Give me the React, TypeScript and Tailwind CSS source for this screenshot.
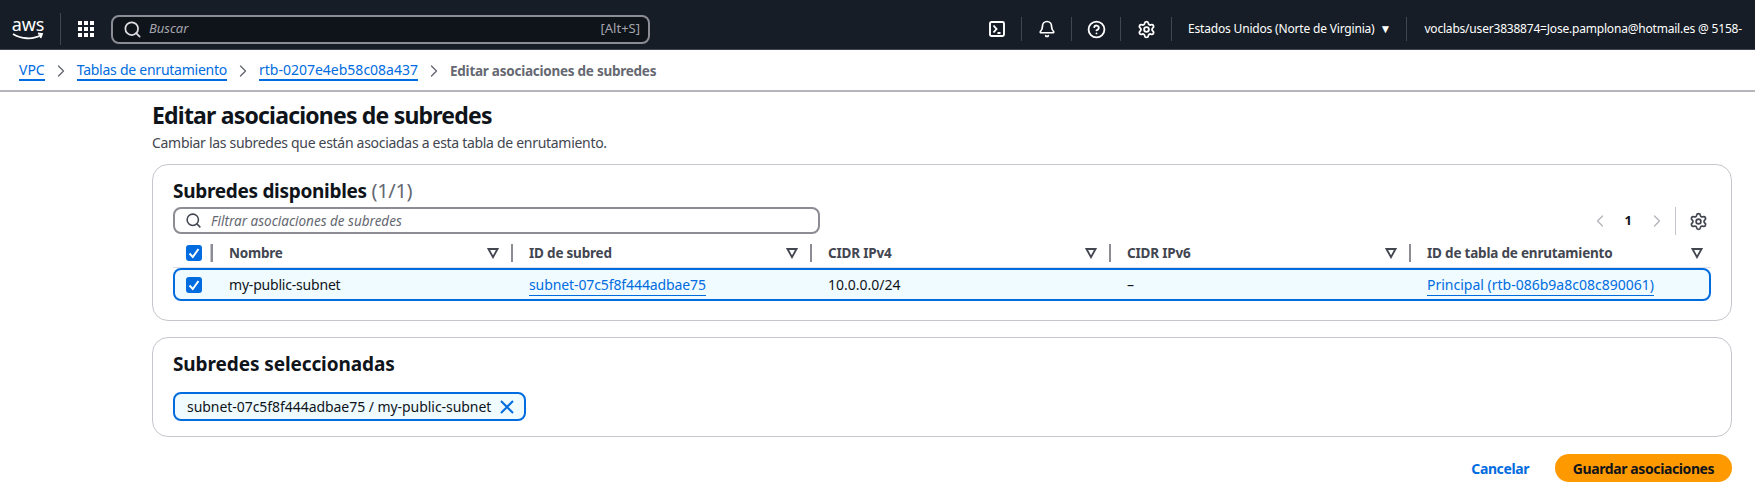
import { Bell, ChevronLeft, ChevronRight, CircleHelp, Search, Settings } from "lucide-react";

const font = "font-['Noto_Sans',sans-serif]";

function Check() {
  return (
    <span className="flex h-4 w-4 items-center justify-center rounded-[3px] bg-[#006ce0]">
      <svg viewBox="0 0 16 16" className="h-4 w-4" fill="none" stroke="white" strokeWidth="2">
        <path d="M3.5 8.5 6.8 12 12.5 4" />
      </svg>
    </span>
  );
}

function FilterIcon() {
  return (
    <svg viewBox="0 0 12 12" className="h-3 w-3" fill="none" stroke="#424650" strokeWidth="1.8">
      <path d="M1.5 2h9L6 10.2z" />
    </svg>
  );
}

function HeaderCell({ title, last }: { title: string; last?: boolean }) {
  return (
    <div className={`flex h-[18px] items-center justify-between border-l-2 border-[#8c8c94] pl-[16px] ${last ? "pr-[6px]" : "pr-[12px]"}`}>
      <span className="text-[13.5px] font-bold tracking-[-0.2px] text-[#424650]">{title}</span>
      <FilterIcon />
    </div>
  );
}

function Crumb({ label, tight }: { label: string; tight?: boolean }) {
  return (
    <>
      <a className={`border-b-2 border-[#006ce0] pb-[1px] leading-[17px] text-[#006ce0] ${tight ? "tracking-[-0.25px]" : ""}`}>{label}</a>
      <ChevronRight size={20} strokeWidth={1.6} className="mx-[6px] text-[#656871]" />
    </>
  );
}

function HeaderSep() {
  return <span className="h-[24px] w-px shrink-0 bg-[#424650]" />;
}

function HeaderIcon({ children, width }: { children: React.ReactNode; width: string }) {
  return <div className={`flex items-center justify-center ${width}`}>{children}</div>;
}

export default function App() {
  return (
    <div className={`${font} h-screen w-full overflow-hidden bg-white text-[#0f141a]`}>
      {/* barra superior */}
      <header className="flex h-[50px] items-center overflow-hidden whitespace-nowrap border-b border-[#424650] bg-[#161d26] pt-[9px] text-white">
        <div className="ml-[12px] flex w-[32px] flex-col items-center">
          <span className="text-[18px] leading-[13px] tracking-[-0.2px]">aws</span>
          <svg viewBox="0 0 32 9" className="mt-[1px] h-[9px] w-[32px]" fill="none" stroke="white" strokeWidth="1.8">
            <path d="M1 2c8 5 20 6 28 1M26 1.5l4 .5-1.5 4" />
          </svg>
        </div>
        <span className="ml-[16px] mr-[17px] h-[32px] w-px bg-[#424650]" />
        <svg viewBox="0 0 16 16" className="h-4 w-4" fill="white">
          <rect x="0" y="0" width="4" height="4" />
          <rect x="6" y="0" width="4" height="4" />
          <rect x="12" y="0" width="4" height="4" />
          <rect x="0" y="6" width="4" height="4" />
          <rect x="6" y="6" width="4" height="4" />
          <rect x="12" y="6" width="4" height="4" />
          <rect x="0" y="12" width="4" height="4" />
          <rect x="6" y="12" width="4" height="4" />
          <rect x="12" y="12" width="4" height="4" />
        </svg>
        <div className="ml-[17px] flex h-[29px] w-[539px] items-center rounded-[8px] border-2 border-[#8c8c94] bg-[#0f141a] pl-[10px] pr-[8px]">
          <Search size={19} strokeWidth={2.2} className="text-[#dedee3]" />
          <span className="ml-[7px] text-[13px] italic text-[#a4a4ad]">Buscar</span>
          <span className="ml-auto text-[13px] text-[#a4a4ad]">[Alt+S]</span>
        </div>
        <svg viewBox="0 0 16 16" className="ml-[339px] h-4 w-4" fill="none" stroke="white" strokeWidth="1.9">
          <rect x="1" y="1" width="14" height="14" rx="1.5" />
          <path d="M4.5 4.5 7.5 8l-3 3.5M8.5 12h3" />
        </svg>
        <span className="ml-[16px]" />
        <HeaderSep />
        <HeaderIcon width="w-[49px]"><Bell size={18} strokeWidth={2.3} /></HeaderIcon>
        <HeaderSep />
        <HeaderIcon width="w-[48px]"><CircleHelp size={19} strokeWidth={2.3} /></HeaderIcon>
        <HeaderSep />
        <HeaderIcon width="w-[50px]"><Settings size={19} strokeWidth={2.3} /></HeaderIcon>
        <HeaderSep />
        <span className="ml-[16px] text-[12px] tracking-[-0.18px]">Estados Unidos (Norte de Virginia)</span>
        <span className="ml-[5px] text-[12px]">▼</span>
        <span className="ml-[15px]" />
        <HeaderSep />
        <span className="ml-[17px] text-[12px] tracking-[-0.2px]">voclabs/user3838874=Jose.pamplona@hotmail.es @ 5158-</span>
      </header>

      {/* migas de pan */}
      <nav className="flex h-[42px] items-center border-b-2 border-[#b4b4bb] pl-[19px] pt-[2px] text-[14px]">
        <Crumb label="VPC" />
        <Crumb label="Tablas de enrutamiento" tight />
        <Crumb label="rtb-0207e4eb58c08a437" />
        <span className="text-[13.5px] font-bold tracking-[-0.25px] text-[#656871]">Editar asociaciones de subredes</span>
      </nav>

      <main className="ml-[152px] mr-[23px]">
        <h1 className="mt-[8px] text-[23px] font-bold leading-[30px] tracking-[-0.8px]">Editar asociaciones de subredes</h1>
        <p className="mt-[3px] text-[14px] leading-[20px] tracking-[-0.3px] text-[#424650]">
          Cambiar las subredes que están asociadas a esta tabla de enrutamiento.
        </p>

        {/* subredes disponibles */}
        <section className="mt-[11px] h-[157px] rounded-[16px] border border-[#c6c6cd] px-[20px] pt-[13px]">
          <h2 className="text-[19px] font-bold leading-[26px] tracking-[-0.3px]">
            Subredes disponibles <span className="text-[20px] font-normal text-[#656871]">(1/1)</span>
          </h2>
          <div className="mt-[3px] flex items-start justify-between">
            <div className="flex h-[27px] w-[647px] items-center rounded-[8px] border-2 border-[#8c8c94] pl-[10px]">
              <Search size={17} strokeWidth={2.2} className="text-[#424650]" />
              <span className="ml-[9px] pt-[1px] text-[13.5px] italic text-[#656871]">Filtrar asociaciones de subredes</span>
            </div>
            <div className="flex h-[28px] items-center text-[#b4b4bb]">
              <ChevronLeft size={20} strokeWidth={1.6} />
              <span className="mx-[15px] text-[13px] font-bold text-[#0f141a]">1</span>
              <ChevronRight size={20} strokeWidth={1.6} />
              <span className="ml-[8px] h-[28px] w-px bg-[#c6c6cd]" />
              <Settings size={19} strokeWidth={2.2} className="ml-[13px] mr-[3px] text-[#424650]" />
            </div>
          </div>
          <div className="mt-[9px] grid h-[24px] grid-cols-[38px_300px_299px_299px_300px_300px] border-b border-[#dedee3] pb-[5px]">
            <div className="flex items-center pl-[13px]">
              <Check />
              <span className="ml-[8px] h-[18px] w-[2px] shrink-0 bg-[#c6c6cd]" />
            </div>
            <HeaderCell title="Nombre" />
            <HeaderCell title="ID de subred" />
            <HeaderCell title="CIDR IPv4" />
            <HeaderCell title="CIDR IPv6" />
            <HeaderCell title="ID de tabla de enrutamiento" last />
          </div>
          <div className="grid h-[33px] grid-cols-[36px_300px_299px_299px_300px_300px] items-center rounded-[8px] border-2 border-[#006ce0] bg-[#f0fbff] text-[14px]">
            <div className="pl-[11px]"><Check /></div>
            <div className="pl-[18px] tracking-[-0.2px]">my-public-subnet</div>
            <div className="pl-[18px]"><a className="border-b border-[#006ce0] pb-[1px] tracking-[-0.1px] text-[#006ce0]">subnet-07c5f8f444adbae75</a></div>
            <div className="pl-[18px]">10.0.0.0/24</div>
            <div className="pl-[18px]">–</div>
            <div className="pl-[18px]"><a className="border-b border-[#006ce0] pb-[1px] text-[#006ce0]">Principal (rtb-086b9a8c08c890061)</a></div>
          </div>
        </section>

        {/* subredes seleccionadas */}
        <section className="mt-[16px] h-[100px] rounded-[16px] border border-[#c6c6cd] px-[20px] pt-[14px]">
          <h2 className="text-[19px] font-bold leading-[24px] tracking-[-0.1px]">Subredes seleccionadas</h2>
          <div className="mt-[16px] inline-flex h-[29px] items-center rounded-[8px] border-2 border-[#006ce0] bg-[#f0fbff] pl-[12px] pr-[10px] text-[14px] tracking-[-0.05px]">
            subnet-07c5f8f444adbae75 / my-public-subnet
            <svg viewBox="0 0 14 14" className="ml-[9px] h-[14px] w-[14px]" fill="none" stroke="#006ce0" strokeWidth="2">
              <path d="M1 1l12 12M13 1 1 13" />
            </svg>
          </div>
        </section>

        <div className="mt-[17px] flex items-center justify-end">
          <button className="text-[14px] font-bold tracking-[-0.4px] text-[#006ce0]">Cancelar</button>
          <button className="ml-[26px] h-[28px] w-[177px] rounded-full bg-[#ff9900] text-[14px] font-bold tracking-[-0.4px] text-[#0f141a]">
            Guardar asociaciones
          </button>
        </div>
      </main>
    </div>
  );
}
